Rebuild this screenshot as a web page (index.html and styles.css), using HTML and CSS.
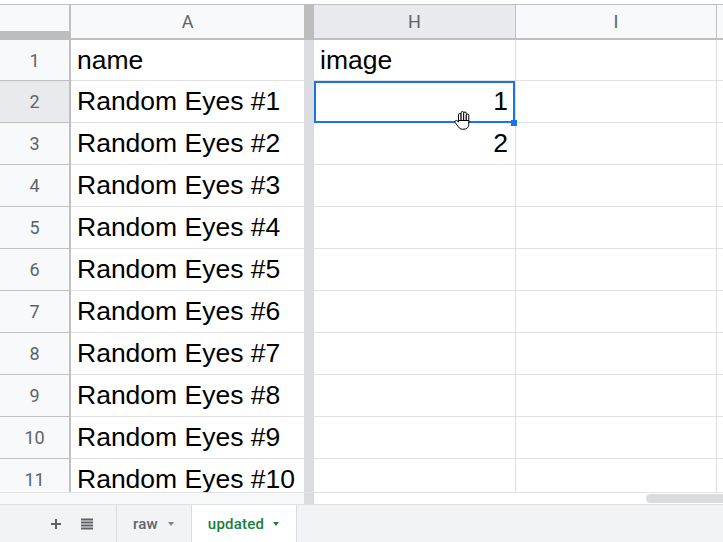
FILE: index.html
```html
<!DOCTYPE html>
<html>
<head>
<meta charset="utf-8">
<link rel="stylesheet" href="styles.css">
</head>
<body>
<div class="app">
  <div class="topstrip"></div>
  <div class="sheet">
    <div class="row hdr">
      <div class="c rh corner"></div>
      <div class="c ca colhead">A</div>
      <div class="c dv"></div>
      <div class="c ch colhead active">H</div>
      <div class="c ci colhead">I</div>
      <div class="c cj"></div>
    </div>
    <div class="row r1">
      <div class="c rh">1</div>
      <div class="c ca txt">name</div>
      <div class="c dv"></div>
      <div class="c ch txt">image</div>
      <div class="c ci"></div>
      <div class="c cj"></div>
    </div>
    <div class="row">
      <div class="c rh active">2</div>
      <div class="c ca txt">Random Eyes #1</div>
      <div class="c dv"></div>
      <div class="c ch txt num selected">1<span class="handle"></span></div>
      <div class="c ci"></div>
      <div class="c cj"></div>
    </div>
    <div class="row">
      <div class="c rh">3</div>
      <div class="c ca txt">Random Eyes #2</div>
      <div class="c dv"></div>
      <div class="c ch txt num">2</div>
      <div class="c ci"></div>
      <div class="c cj"></div>
    </div>
    <div class="row">
      <div class="c rh">4</div>
      <div class="c ca txt">Random Eyes #3</div>
      <div class="c dv"></div>
      <div class="c ch"></div>
      <div class="c ci"></div>
      <div class="c cj"></div>
    </div>
    <div class="row">
      <div class="c rh">5</div>
      <div class="c ca txt">Random Eyes #4</div>
      <div class="c dv"></div>
      <div class="c ch"></div>
      <div class="c ci"></div>
      <div class="c cj"></div>
    </div>
    <div class="row">
      <div class="c rh">6</div>
      <div class="c ca txt">Random Eyes #5</div>
      <div class="c dv"></div>
      <div class="c ch"></div>
      <div class="c ci"></div>
      <div class="c cj"></div>
    </div>
    <div class="row">
      <div class="c rh">7</div>
      <div class="c ca txt">Random Eyes #6</div>
      <div class="c dv"></div>
      <div class="c ch"></div>
      <div class="c ci"></div>
      <div class="c cj"></div>
    </div>
    <div class="row">
      <div class="c rh">8</div>
      <div class="c ca txt">Random Eyes #7</div>
      <div class="c dv"></div>
      <div class="c ch"></div>
      <div class="c ci"></div>
      <div class="c cj"></div>
    </div>
    <div class="row">
      <div class="c rh">9</div>
      <div class="c ca txt">Random Eyes #8</div>
      <div class="c dv"></div>
      <div class="c ch"></div>
      <div class="c ci"></div>
      <div class="c cj"></div>
    </div>
    <div class="row">
      <div class="c rh">10</div>
      <div class="c ca txt">Random Eyes #9</div>
      <div class="c dv"></div>
      <div class="c ch"></div>
      <div class="c ci"></div>
      <div class="c cj"></div>
    </div>
    <div class="row">
      <div class="c rh">11</div>
      <div class="c ca txt">Random Eyes #10</div>
      <div class="c dv"></div>
      <div class="c ch"></div>
      <div class="c ci"></div>
      <div class="c cj"></div>
    </div>
  </div>
  <div class="hscroll">
    <div class="hs-frozen"></div>
    <div class="hs-div"></div>
    <div class="hs-track"><div class="hs-thumb"></div></div>
  </div>
  <div class="tabbar">
    <div class="tb-icons">
      <svg class="ic" width="10" height="10" viewBox="0 0 10 10"><path d="M4 0h2v4h4v2H6v4H4V6H0V4h4z" fill="#5f6368"/></svg>
      <svg class="ic" width="12" height="12" viewBox="0 0 12 12"><path d="M0 0.5h12v2H0zM0 3.5h12v2H0zM0 6.5h12v2H0zM0 9.5h12v2H0z" fill="#5f6368"/></svg>
    </div>
    <div class="tab">raw<span class="arrow"></span></div>
    <div class="tab current">updated<span class="arrow"></span></div>
  </div>
  <svg class="cursor" width="18" height="20" viewBox="0 0 18 20">
    <g fill="#fff" stroke="#000" stroke-width="1" stroke-linejoin="round">
      <rect x="4.5" y="3.5" width="2.6" height="9" rx="1.3"/>
      <rect x="7.1" y="1.5" width="2.6" height="10" rx="1.3"/>
      <rect x="9.7" y="2" width="2.6" height="10" rx="1.3"/>
      <rect x="12.3" y="4" width="2.5" height="9" rx="1.25"/>
      <path d="M4.5 10.5H14.8V14.5C14.8 17.2 12.8 19.2 10 19.2H8.3C6.5 19.2 5.4 18.3 4.4 16.8L1.2 12.6C0.6 11.8 1 10.7 2 10.5C2.9 10.3 3.6 10.9 4.5 12.2Z"/>
    </g>
  </svg>
</div>
</body>
</html>
```

FILE: styles.css
```css
html, body {
  margin: 0;
  padding: 0;
}
body {
  width: 723px;
  height: 542px;
  overflow: hidden;
  background: #fff;
  font-family: "Liberation Sans", Arial, sans-serif;
}
.app {
  position: relative;
  width: 723px;
  height: 542px;
  display: flex;
  flex-direction: column;
  overflow: hidden;
}
.topstrip {
  height: 4px;
  flex: none;
  background: #fff;
}
.sheet {
  height: 488px;
  flex: none;
  overflow: hidden;
}
.row {
  display: flex;
  height: 42px;
}
.row.r1 {
  height: 41px;
}
.row.hdr {
  height: 35px;
  border-top: 1px solid #c0c0c0;
}
.c {
  box-sizing: border-box;
  flex: none;
  height: 100%;
  border-bottom: 1px solid #e1e1e1;
  border-right: 1px solid #e1e1e1;
}
.rh {
  width: 71px;
  background: #f8f9fa;
  border-right: 2px solid #c0c0c0;
  border-bottom-color: #c0c0c0;
  display: flex;
  align-items: center;
  justify-content: center;
  font-family: Roboto, "Liberation Sans", sans-serif;
  font-size: 18px;
  color: #5f6368;
}
.rh.active {
  background: #e8eaed;
}
.ca {
  width: 233px;
  border-right: none;
}
.dv {
  width: 10px;
  background: #dadce0;
  border: none;
}
.ch {
  width: 202px;
}
.ci {
  width: 201px;
}
.cj {
  flex: 1;
  border-right: none;
}
.hdr .c {
  background: #f8f9fa;
  border-bottom: 2px solid #c0c0c0;
  border-right-color: #c0c0c0;
}
.hdr .dv {
  background: #bdbdbd;
  border-bottom: 2px solid #bdbdbd;
}
.hdr .corner {
  border-bottom: 9px solid #bdbdbd;
}
.hdr .ch.active {
  background: #e8eaed;
}
.colhead {
  display: flex;
  align-items: center;
  justify-content: center;
  font-family: Roboto, "Liberation Sans", sans-serif;
  font-size: 18px;
  color: #5f6368;
}
.txt {
  display: flex;
  align-items: center;
  padding-left: 6px;
  font-size: 26.5px;
  color: #000;
  white-space: nowrap;
}
.num {
  justify-content: flex-end;
  padding-right: 7px;
}
.selected {
  position: relative;
}
.selected::after {
  content: "";
  position: absolute;
  left: 0;
  top: 0;
  right: 0;
  bottom: -1px;
  border: 2px solid #1a73e8;
}
.handle {
  position: absolute;
  left: 197px;
  top: 39px;
  width: 6px;
  height: 6px;
  background: #1a73e8;
  z-index: 2;
}
.hscroll {
  height: 12px;
  flex: none;
  box-sizing: border-box;
  border-top: 1px solid #e1e1e1;
  display: flex;
}
.hs-frozen {
  width: 304px;
  background: #f8f9fa;
}
.hs-div {
  width: 10px;
  background: #dadce0;
}
.hs-track {
  flex: 1;
  display: flex;
  justify-content: flex-end;
  align-items: center;
  background: #fff;
}
.hs-thumb {
  width: 77px;
  height: 9px;
  background: #dadce0;
  border-radius: 5px 0 0 5px;
}
.tabbar {
  height: 38px;
  flex: none;
  box-sizing: border-box;
  border-top: 1px solid #e1e1e1;
  background: #f1f3f4;
  display: flex;
  font-family: Roboto, "Liberation Sans", sans-serif;
  font-weight: 500;
  font-size: 15px;
  letter-spacing: 0.2px;
}
.tb-icons {
  width: 116px;
  display: flex;
  align-items: center;
  padding-left: 51px;
  box-sizing: border-box;
  gap: 20px;
}
.ic {
  display: block;
}
.tab {
  display: flex;
  align-items: center;
  border-left: 1px solid #dadce0;
  padding: 0 17px 0 16px;
  color: #5f6368;
  gap: 10px;
}
.tab.current {
  background: #fff;
  color: #188038;
  border-right: 1px solid #dadce0;
  gap: 9px;
}
.arrow {
  width: 0;
  height: 0;
  border-top: 4px solid #80868b;
  border-left: 3.5px solid transparent;
  border-right: 3.5px solid transparent;
}
.tab.current .arrow {
  border-top-color: #188038;
}
.cursor {
  position: absolute;
  left: 454px;
  top: 110px;
}
```
